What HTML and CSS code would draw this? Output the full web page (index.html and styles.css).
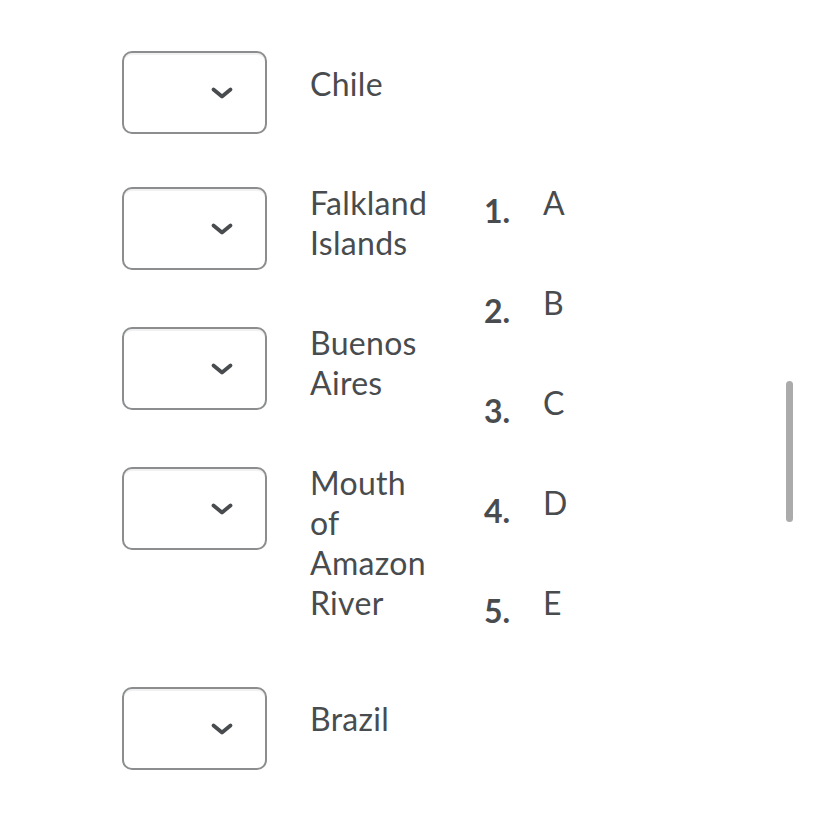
FILE: index.html
```html
<!DOCTYPE html>
<html>
<head>
<meta charset="utf-8">
<link rel="stylesheet" href="styles.css">
</head>
<body>
<div class="page">
  <div class="matches">
    <div class="row row-1">
      <div class="select"><svg class="chev" width="24" height="14" viewBox="0 0 24 14"><path d="M3.5 3.5 L12 10.5 L20.5 3.5" fill="none" stroke="#494c4e" stroke-width="3.8" stroke-linecap="round" stroke-linejoin="round"/></svg></div>
      <div class="label">Chile</div>
    </div>
    <div class="row row-2">
      <div class="select"><svg class="chev" width="24" height="14" viewBox="0 0 24 14"><path d="M3.5 3.5 L12 10.5 L20.5 3.5" fill="none" stroke="#494c4e" stroke-width="3.8" stroke-linecap="round" stroke-linejoin="round"/></svg></div>
      <div class="label">Falkland<br>Islands</div>
    </div>
    <div class="row row-3">
      <div class="select"><svg class="chev" width="24" height="14" viewBox="0 0 24 14"><path d="M3.5 3.5 L12 10.5 L20.5 3.5" fill="none" stroke="#494c4e" stroke-width="3.8" stroke-linecap="round" stroke-linejoin="round"/></svg></div>
      <div class="label">Buenos<br>Aires</div>
    </div>
    <div class="row row-4">
      <div class="select"><svg class="chev" width="24" height="14" viewBox="0 0 24 14"><path d="M3.5 3.5 L12 10.5 L20.5 3.5" fill="none" stroke="#494c4e" stroke-width="3.8" stroke-linecap="round" stroke-linejoin="round"/></svg></div>
      <div class="label">Mouth<br>of<br>Amazon<br>River</div>
    </div>
    <div class="row row-5">
      <div class="select"><svg class="chev" width="24" height="14" viewBox="0 0 24 14"><path d="M3.5 3.5 L12 10.5 L20.5 3.5" fill="none" stroke="#494c4e" stroke-width="3.8" stroke-linecap="round" stroke-linejoin="round"/></svg></div>
      <div class="label">Brazil</div>
    </div>
  </div>
  <ol class="choices">
    <li class="choice"><span class="num">1.</span><span class="letter">A</span></li>
    <li class="choice"><span class="num">2.</span><span class="letter">B</span></li>
    <li class="choice"><span class="num">3.</span><span class="letter">C</span></li>
    <li class="choice"><span class="num">4.</span><span class="letter">D</span></li>
    <li class="choice"><span class="num">5.</span><span class="letter">E</span></li>
  </ol>
</div>
<div class="scrollbar"></div>
</body>
</html>
```
FILE: styles.css
```css
html, body {
  margin: 0;
  padding: 0;
  background: #ffffff;
}
body {
  width: 828px;
  height: 828px;
  overflow: hidden;
  font-family: Lato, "Open Sans", sans-serif;
  color: #494c4e;
}
.page {
  display: flex;
  align-items: flex-start;
  padding-left: 122px;
}
.matches {
  display: flex;
  flex-direction: column;
  padding-top: 51px;
  width: 362px;
}
.row {
  display: flex;
  align-items: flex-start;
}
.select {
  box-sizing: border-box;
  width: 145px;
  height: 83px;
  border: 2px solid #8b8d8f;
  border-radius: 10px;
  box-shadow: inset 0 2px 0 #f1f1f1;
  display: flex;
  align-items: center;
  justify-content: flex-end;
  padding-right: 31px;
  flex: none;
}
.chev {
  display: block;
}
.label {
  margin-left: 43px;
  font-size: 32px;
  letter-spacing: 0.3px;
  line-height: 40px;
}
.row-1 .label { margin-top: 13px; }
.row-2 { margin-top: 49px; }
.row-2 .select { margin-top: 4px; }
.row-3 { margin-top: 53px; }
.row-3 .select { margin-top: 4px; }
.row-4 { margin-top: 53px; }
.row-4 .select { margin-top: 4px; }
.row-5 { margin-top: 64px; }
.row-5 .label { margin-top: 12px; }

.choices {
  list-style: none;
  margin: 0;
  padding: 183px 0 0 0;
  display: flex;
  flex-direction: column;
}
.choice {
  display: flex;
  align-items: flex-start;
  height: 100px;
}
.num {
  width: 59px;
  margin-top: 8px;
  font-size: 32px;
  font-weight: 700;
  line-height: 40px;
}
.letter {
  font-size: 32px;
  line-height: 40px;
}
.scrollbar {
  position: fixed;
  left: 786px;
  top: 381px;
  width: 7px;
  height: 141px;
  border-radius: 4px;
  background: #ababab;
}
```
